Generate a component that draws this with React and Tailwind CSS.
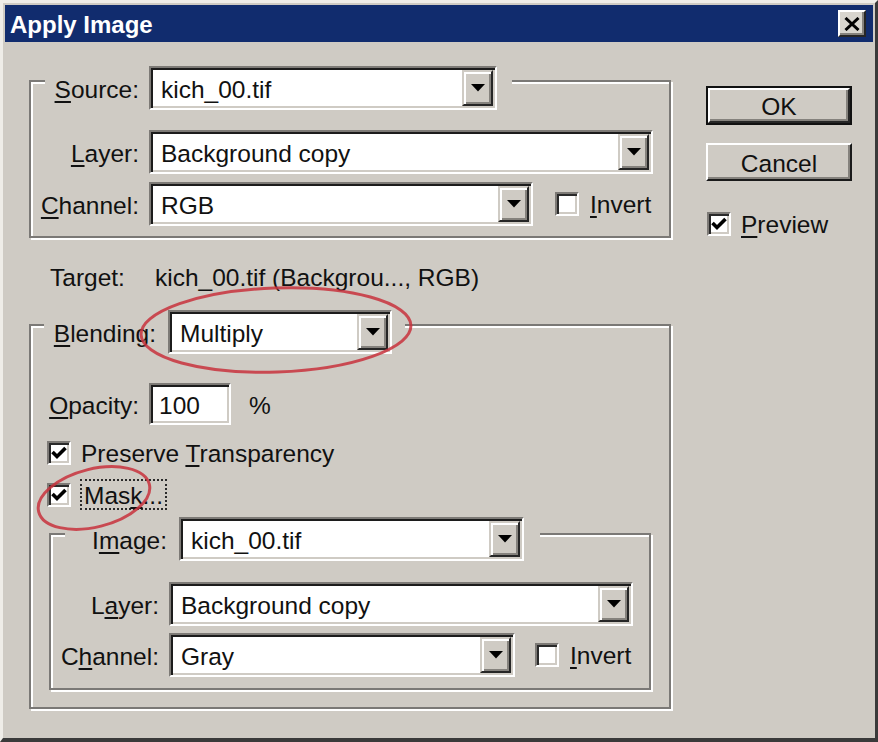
import React from "react";

function U({ children }) {
  return <span className="underline decoration-2 underline-offset-[3px]">{children}</span>;
}

function Arrow() {
  return (
    <div className="flex h-full w-[31px] shrink-0 items-center justify-center border-2 border-t-[#cfcbc4] border-l-[#cfcbc4] border-b-[#262626] border-r-[#262626] bg-[#cfcbc4] shadow-[inset_2px_2px_0_#ffffff,inset_-2px_-2px_0_#85827d]">
      <svg width="14" height="8" viewBox="0 0 14 8">
        <path d="M0 0h14L7 7.5z" fill="#000" />
      </svg>
    </div>
  );
}

function Select({ value, className }) {
  return (
    <div
      className={
        "flex h-[44px] shrink-0 items-stretch border-2 border-t-[#7d7a76] border-l-[#7d7a76] border-b-white border-r-white bg-white p-[2px] shadow-[inset_2px_2px_0_#1c1c1c,inset_-2px_-2px_0_#cfcbc4] " +
        className
      }
    >
      <div className="flex flex-1 items-center pl-[8px] pt-[5px]">{value}</div>
      <Arrow />
    </div>
  );
}

function Check({ checked }) {
  return (
    <div className="flex h-[24px] w-[24px] shrink-0 items-center justify-center border-2 border-t-[#7d7a76] border-l-[#7d7a76] border-b-white border-r-white bg-white shadow-[inset_2px_2px_0_#2a2a2a,inset_-2px_-2px_0_#cfcbc4]">
      {checked && (
        <svg width="16" height="14" viewBox="0 0 16 14">
          <path d="M1.5 6 L6 10.5 L14.5 2" fill="none" stroke="#000" strokeWidth="3.6" />
        </svg>
      )}
    </div>
  );
}

const frame =
  "border-2 border-[#7b7976] shadow-[inset_2px_2px_0_#ffffff,2px_2px_0_#ffffff]";

export default function App() {
  return (
    <div className="relative box-border h-[742px] w-[878px] overflow-hidden border-t-[3px] border-l-[3px] border-r-[3px] border-b-[4px] border-t-[#efede8] border-l-[#efede8] border-r-[#3a3a3a] border-b-[#3a3a3a] bg-[#cfcbc4] p-[2px] font-['Liberation_Sans',Arial,sans-serif] text-[24.5px] leading-none text-[#111]">
      {/* title bar */}
      <div className="flex h-[37px] items-center justify-between bg-[#112c6e] pl-[5px] pr-[7px]">
        <span className="pt-[3px] text-[24px] font-bold text-white">Apply Image</span>
        <div className="flex h-[27px] w-[28px] items-center justify-center border-2 border-t-white border-l-white border-b-[#262626] border-r-[#262626] bg-[#d8d5ce] shadow-[inset_-2px_-2px_0_#85827d]">
          <svg width="16" height="14" viewBox="0 0 16 14">
            <path d="M1.5 1 L14.5 13 M14.5 1 L1.5 13" stroke="#000" strokeWidth="3" />
          </svg>
        </div>
      </div>

      <div className="flex pl-[24px]">
        {/* left column */}
        <div className="flex w-[642px] flex-col">
          <div className={"mt-[38px] flex flex-col pb-[10px] " + frame}>
            <div className="-mt-[16px] ml-[14px] flex items-center self-start bg-[#cfcbc4] pr-[15px]">
              <div className="w-[94px] pt-[5px] text-right">
                <U>S</U>ource:
              </div>
              <Select value="kich_00.tif" className="ml-[10px] w-[348px]" />
            </div>
            <div className="mt-[20px] flex items-center">
              <div className="w-[108px] pt-[5px] text-right">
                <U>L</U>ayer:
              </div>
              <Select value="Background copy" className="ml-[10px] w-[504px]" />
            </div>
            <div className="mt-[8px] flex items-center">
              <div className="w-[108px] pt-[5px] text-right">
                <U>C</U>hannel:
              </div>
              <Select value="RGB" className="ml-[10px] w-[384px]" />
              <div className="ml-[22px]">
                <Check />
              </div>
              <span className="ml-[11px] pt-[3px]">
                <U>I</U>nvert
              </span>
            </div>
          </div>

          <div className="mt-[24px] flex h-[28px] items-center pl-[21px] pt-[5px]">
            <span className="w-[105px]">Target:</span>
            <span>kich_00.tif (Backgrou..., RGB)</span>
          </div>

          <div className={"mt-[34px] flex flex-col pb-[17px] " + frame}>
            <div className="-mt-[16px] ml-[13px] flex items-center self-start bg-[#cfcbc4] pr-[13px]">
              <div className="w-[112px] pt-[5px] text-right">
                <U>B</U>lending:
              </div>
              <Select value="Multiply" className="ml-[12px] w-[224px]" />
            </div>
            <div className="mt-[29px] flex items-center">
              <div className="w-[108px] pt-[5px] text-right">
                <U>O</U>pacity:
              </div>
              <div className="ml-[10px] flex h-[42px] w-[82px] items-center border-2 border-t-[#7d7a76] border-l-[#7d7a76] border-b-white border-r-white bg-white pl-[8px] pt-[5px] shadow-[inset_2px_2px_0_#1c1c1c,inset_-2px_-2px_0_#cfcbc4]">
                100
              </div>
              <span className="ml-[18px] pt-[5px]">%</span>
            </div>
            <div className="mt-[16px] ml-[16px] flex h-[23px] items-center">
              <Check checked />
              <span className="ml-[10px] pt-[3px]">
                Preserve <U>T</U>ransparency
              </span>
            </div>
            <div className="mt-[19px] ml-[16px] flex h-[23px] items-center">
              <Check checked />
              <div className="ml-[9px] flex h-[31px] items-center border-2 border-dotted border-[#2a2a2a] px-[2px] pt-[4px]">
                Mas<U>k</U>...
              </div>
            </div>

            <div className={"mt-[27px] ml-[18px] flex w-[602px] flex-col pb-[11px] " + frame}>
              <div className="-mt-[18px] ml-[14px] flex items-center self-start bg-[#cfcbc4] pr-[16px]">
                <div className="w-[102px] pt-[5px] text-right">
                  I<U>m</U>age:
                </div>
                <Select value="kich_00.tif" className="ml-[12px] w-[345px]" />
              </div>
              <div className="mt-[21px] flex items-center">
                <div className="w-[108px] pt-[5px] text-right">
                  L<U>a</U>yer:
                </div>
                <Select value="Background copy" className="ml-[10px] w-[464px]" />
              </div>
              <div className="mt-[7px] flex items-center">
                <div className="w-[108px] pt-[5px] text-right">
                  C<U>h</U>annel:
                </div>
                <Select value="Gray" className="ml-[10px] w-[346px]" />
                <div className="ml-[20px]">
                  <Check />
                </div>
                <span className="ml-[11px] pt-[3px]">
                  <U>I</U>nvert
                </span>
              </div>
            </div>
          </div>
        </div>

        {/* right column */}
        <div className="ml-[35px] flex w-[146px] flex-col pt-[44px]">
          <div className="h-[39px] border-2 border-[#111]">
            <div className="flex h-full items-center justify-center border-2 border-t-white border-l-white border-b-[#262626] border-r-[#262626] pt-[4px] shadow-[inset_-2px_-2px_0_#85827d]">
              OK
            </div>
          </div>
          <div className="mt-[18px] flex h-[38px] items-center justify-center border-2 border-t-white border-l-white border-b-[#1a1a1a] border-r-[#1a1a1a] pt-[4px] shadow-[inset_-2px_-2px_0_#85827d]">
            Cancel
          </div>
          <div className="mt-[31px] ml-[1px] flex h-[24px] items-center">
            <Check checked />
            <span className="ml-[10px] pt-[3px]">
              <U>P</U>review
            </span>
          </div>
        </div>
      </div>

      {/* red annotation ellipses */}
      <svg
        className="pointer-events-none absolute left-[-3px] top-[-3px]"
        width="878"
        height="742"
        viewBox="0 0 878 742"
      >
        <ellipse
          cx="276"
          cy="330"
          rx="135"
          ry="42"
          transform="rotate(-2 276 330)"
          fill="none"
          stroke="#c8333d"
          strokeOpacity="0.85"
          strokeWidth="3"
        />
        <ellipse
          cx="94"
          cy="498"
          rx="57"
          ry="29"
          transform="rotate(-14 94 498)"
          fill="none"
          stroke="#c8333d"
          strokeOpacity="0.85"
          strokeWidth="3"
        />
      </svg>
    </div>
  );
}
